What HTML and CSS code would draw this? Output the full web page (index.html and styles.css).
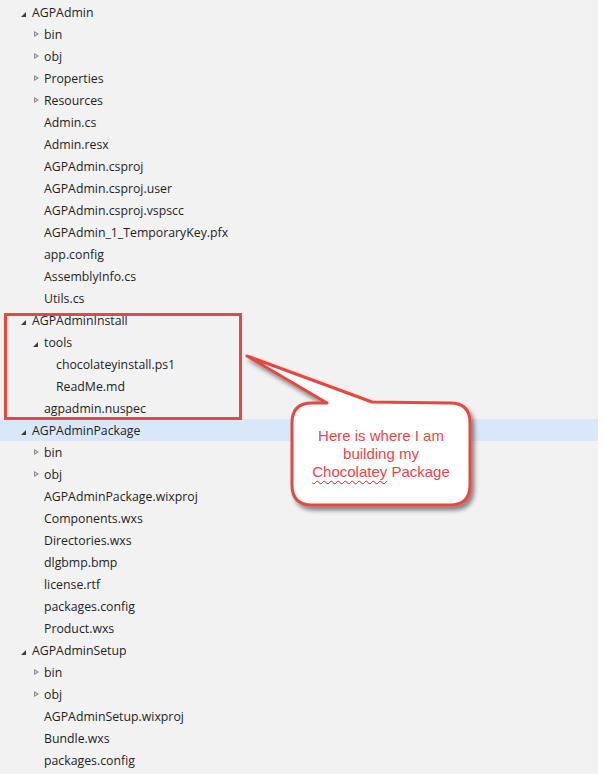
FILE: index.html
```html
<!DOCTYPE html>
<html>
<head>
<meta charset="utf-8">
<link rel="stylesheet" href="styles.css">
</head>
<body>
<div class="pane">
  <ul class="tree">
    <li class="row l0"><span class="tw exp"></span><span class="lbl">AGPAdmin</span></li>
    <li class="row l1"><span class="tw col"></span><span class="lbl">bin</span></li>
    <li class="row l1"><span class="tw col"></span><span class="lbl">obj</span></li>
    <li class="row l1"><span class="tw col"></span><span class="lbl">Properties</span></li>
    <li class="row l1"><span class="tw col"></span><span class="lbl">Resources</span></li>
    <li class="row l1"><span class="tw"></span><span class="lbl">Admin.cs</span></li>
    <li class="row l1"><span class="tw"></span><span class="lbl">Admin.resx</span></li>
    <li class="row l1"><span class="tw"></span><span class="lbl">AGPAdmin.csproj</span></li>
    <li class="row l1"><span class="tw"></span><span class="lbl">AGPAdmin.csproj.user</span></li>
    <li class="row l1"><span class="tw"></span><span class="lbl">AGPAdmin.csproj.vspscc</span></li>
    <li class="row l1"><span class="tw"></span><span class="lbl">AGPAdmin_1_TemporaryKey.pfx</span></li>
    <li class="row l1"><span class="tw"></span><span class="lbl">app.config</span></li>
    <li class="row l1"><span class="tw"></span><span class="lbl">AssemblyInfo.cs</span></li>
    <li class="row l1"><span class="tw"></span><span class="lbl">Utils.cs</span></li>
    <li class="row l0"><span class="tw exp"></span><span class="lbl">AGPAdminInstall</span></li>
    <li class="row l1"><span class="tw exp"></span><span class="lbl">tools</span></li>
    <li class="row l2"><span class="tw"></span><span class="lbl">chocolateyinstall.ps1</span></li>
    <li class="row l2"><span class="tw"></span><span class="lbl">ReadMe.md</span></li>
    <li class="row l1"><span class="tw"></span><span class="lbl">agpadmin.nuspec</span></li>
    <li class="row l0 selected"><span class="tw exp"></span><span class="lbl">AGPAdminPackage</span></li>
    <li class="row l1"><span class="tw col"></span><span class="lbl">bin</span></li>
    <li class="row l1"><span class="tw col"></span><span class="lbl">obj</span></li>
    <li class="row l1"><span class="tw"></span><span class="lbl">AGPAdminPackage.wixproj</span></li>
    <li class="row l1"><span class="tw"></span><span class="lbl">Components.wxs</span></li>
    <li class="row l1"><span class="tw"></span><span class="lbl">Directories.wxs</span></li>
    <li class="row l1"><span class="tw"></span><span class="lbl">dlgbmp.bmp</span></li>
    <li class="row l1"><span class="tw"></span><span class="lbl">license.rtf</span></li>
    <li class="row l1"><span class="tw"></span><span class="lbl">packages.config</span></li>
    <li class="row l1"><span class="tw"></span><span class="lbl">Product.wxs</span></li>
    <li class="row l0"><span class="tw exp"></span><span class="lbl">AGPAdminSetup</span></li>
    <li class="row l1"><span class="tw col"></span><span class="lbl">bin</span></li>
    <li class="row l1"><span class="tw col"></span><span class="lbl">obj</span></li>
    <li class="row l1"><span class="tw"></span><span class="lbl">AGPAdminSetup.wixproj</span></li>
    <li class="row l1"><span class="tw"></span><span class="lbl">Bundle.wxs</span></li>
    <li class="row l1"><span class="tw"></span><span class="lbl">packages.config</span></li>
  </ul>

  <div class="highlight-box"></div>

  <div class="callout">
    <svg class="callout-shape" width="250" height="180" viewBox="240 340 250 180">
      <defs>
        <filter id="sh" x="-20%" y="-20%" width="140%" height="140%">
          <feDropShadow dx="3" dy="4" stdDeviation="2.2" flood-color="#000" flood-opacity="0.45"/>
        </filter>
      </defs>
      <path d="M247 356 L372 402 L450 403 Q470 403 470 423 L470 485 Q470 505 450 505 L312 505 Q292 505 292 485 L292 423 Q292 403 312 403 L327 403 Z"
            fill="#ffffff" stroke="#e8473f" stroke-width="3" stroke-linejoin="round" filter="url(#sh)"/>
    </svg>
    <div class="callout-text">Here is where I am<br>building my<br><span class="spell">Chocolatey</span> Package</div>
  </div>
</div>
</body>
</html>
```

FILE: styles.css
```css
html, body {
  margin: 0;
  padding: 0;
  background: #ffffff;
}

.pane {
  position: relative;
  width: 598px;
  height: 774px;
  background: #f2f2f2;
  overflow: hidden;
}

.tree {
  list-style: none;
  margin: 0;
  padding: 1px 0 0 0;
  font-family: "Open Sans", "Noto Sans", sans-serif;
  font-size: 12.3px;
  color: #1e1e1e;
}

.row {
  display: flex;
  align-items: flex-start;
  height: 22px;
  white-space: nowrap;
}

.row.selected {
  background: #d9e8f9;
}

.l0 { padding-left: 20px; }
.l1 { padding-left: 32px; }
.l2 { padding-left: 44px; }

.tw {
  position: relative;
  width: 12px;
  height: 22px;
  flex: none;
}

.tw.exp::before {
  content: "";
  position: absolute;
  left: 1px;
  top: 11px;
  width: 0;
  height: 0;
  border-style: solid;
  border-width: 0 0 5px 5px;
  border-color: transparent transparent #3d3d3d transparent;
}

.tw.col::before {
  content: "";
  position: absolute;
  left: 2px;
  top: 8px;
  width: 0;
  height: 0;
  border-style: solid;
  border-width: 3px 0 3px 5px;
  border-color: transparent transparent transparent #8c8c8c;
}

.tw.col::after {
  content: "";
  position: absolute;
  left: 3px;
  top: 9.5px;
  width: 0;
  height: 0;
  border-style: solid;
  border-width: 1.5px 0 1.5px 2.5px;
  border-color: transparent transparent transparent #f2f2f2;
}

.lbl {
  padding-top: 1px;
  line-height: 21px;
}

.highlight-box {
  position: absolute;
  left: 4px;
  top: 313px;
  width: 232px;
  height: 101px;
  border: 3px solid #e8473f;
}

.callout {
  position: absolute;
  left: 240px;
  top: 340px;
  width: 250px;
  height: 180px;
}

.callout-shape {
  position: absolute;
  left: 0;
  top: 0;
  display: block;
}

.callout-text {
  position: absolute;
  left: 52px;
  top: 87px;
  width: 178px;
  text-align: center;
  font-family: "Liberation Sans", Arial, sans-serif;
  font-size: 15px;
  line-height: 18px;
  color: #e8474a;
}

.spell {
  text-decoration: underline wavy #e02020;
  text-decoration-thickness: 1px;
  text-underline-offset: 3px;
}
```
